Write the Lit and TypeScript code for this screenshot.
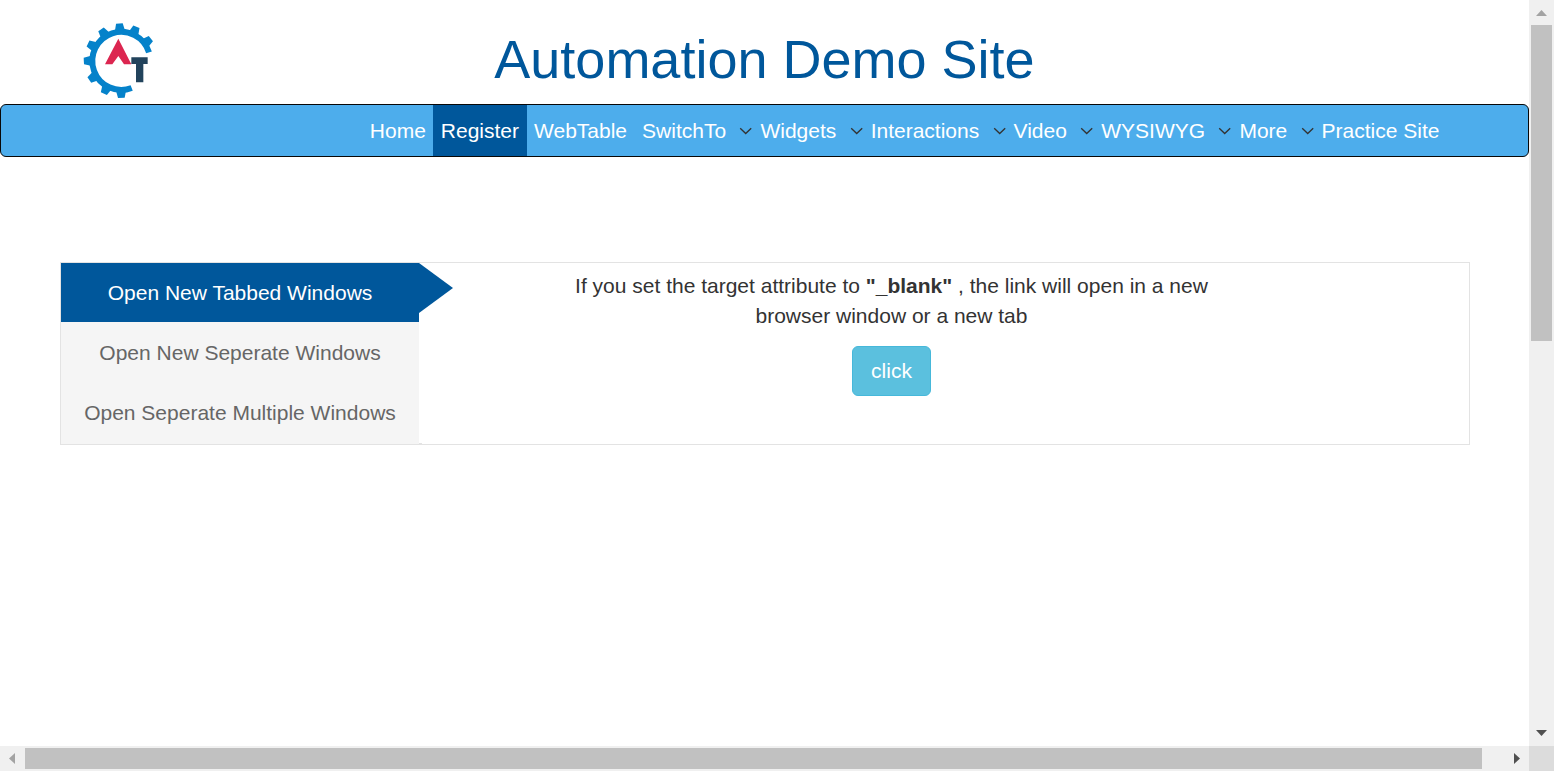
import { LitElement, html, css, svg } from "lit";
import { customElement, state } from "lit/decorators.js";

interface NavItem {
  label: string;
  menu?: boolean;
  active?: boolean;
}

const NAV: NavItem[] = [
  { label: "Home" },
  { label: "Register", active: true },
  { label: "WebTable" },
  { label: "SwitchTo", menu: true },
  { label: "Widgets", menu: true },
  { label: "Interactions", menu: true },
  { label: "Video", menu: true },
  { label: "WYSIWYG", menu: true },
  { label: "More", menu: true },
  { label: "Practice Site" },
];

const TABS = ["Open New Tabbed Windows", "Open New Seperate Windows", "Open Seperate Multiple Windows"];

const TEETH = [-92, -65, -36, -122, -152, 180, 149, 118, 90];

@customElement("site-logo")
export class SiteLogo extends LitElement {
  static styles = css`
    :host { display: block; width: 100px; height: 83px; }
    svg { display: block; }
  `;
  render() {
    return html`<svg width="100" height="83" viewBox="0 0 300 249">
      <path d="M237 112 A87 87 0 1 0 185 219" fill="none" stroke="#0582ca" stroke-width="18" />
      ${TEETH.map(
        (a) => svg`<path transform="translate(153 137) rotate(${a})" d="M90 -15 L111 -11 L112 9 L90 15 Z" fill="#0582ca" />`
      )}
      <path d="M145 71 L184 148 L162 148 L145 123 L127 148 L105 148 Z" fill="#dc2650" />
      <path d="M184 127 H233 V147 H220 V202 H198 V147 H184 Z" fill="#22435c" />
    </svg>`;
  }
}

@customElement("scroll-bar")
export class ScrollBar extends LitElement {
  static styles = css`
    :host { display: flex; background: #f0f0f0; box-sizing: border-box; }
    :host([vertical]) { flex-direction: column; padding: 0 2px; }
    :host(:not([vertical])) { padding: 2px 0; }
    .thumb { background: #c1c1c1; }
    .space { flex: 1; }
    :host([vertical]) .thumb { height: 316px; }
    :host(:not([vertical])) .thumb { width: 1457px; }
    svg { display: block; flex: none; }
  `;
  render() {
    const v = this.hasAttribute("vertical");
    return v
      ? html`<svg width="21" height="25"><path d="M5 16 L10.5 10 L16 16Z" fill="#a3a3a3" /></svg>
          <div class="thumb"></div><div class="space"></div>
          <svg width="21" height="25"><path d="M5 9 L10.5 15 L16 9Z" fill="#505050" /></svg>`
      : html`<svg width="25" height="21"><path d="M15 5 L9 10.5 L15 16Z" fill="#a3a3a3" /></svg>
          <div class="thumb"></div><div class="space"></div>
          <svg width="25" height="21"><path d="M10 5 L16 10.5 L10 16Z" fill="#505050" /></svg>`;
  }
}

@customElement("app-root")
export class AppRoot extends LitElement {
  @state() private tab = 0;

  static styles = css`
    :host {
      display: grid;
      grid-template-columns: 1529px 25px;
      grid-template-rows: 746px 25px;
      width: 1554px;
      height: 771px;
      overflow: hidden;
      background: #fff;
      color: #333;
      font: 21px/30px "Liberation Sans", Arial, sans-serif;
    }
    .page { overflow: hidden; }
    .corner { background: #dcdcdc; }
    .header {
      display: grid;
      grid-template-columns: 70px 100px 1fr;
      height: 104px;
      box-sizing: border-box;
      padding-top: 15px;
    }
    .header site-logo { grid-column: 2; }
    .title {
      margin: 14px 0 0 324.3px;
      font-size: 54px;
      line-height: 60px;
      font-weight: 400;
      color: #00579b;
      white-space: nowrap;
    }
    .nav {
      display: flex;
      box-sizing: border-box;
      height: 53px;
      padding-left: 361.3px;
      border: 1px solid #080808;
      border-radius: 6px;
      background: #4dadec;
      color: #fff;
    }
    .item {
      display: flex;
      align-items: center;
      padding: 0 7.5px;
      white-space: nowrap;
    }
    .item.active { background: #00579b; }
    .caret { display: block; margin-left: 13.4px; margin-right: -7.55px; }
    .panel {
      display: flex;
      box-sizing: border-box;
      width: 1410px;
      height: 183px;
      margin: 105px 0 0 60px;
      border: 1px solid #e3e3e3;
    }
    .tabs { width: 358px; background: #f5f5f5; }
    .tab {
      display: flex;
      position: relative;
      align-items: center;
      justify-content: center;
      height: 60px;
      color: #666;
      cursor: pointer;
    }
    .tab.active { height: 59px; margin-bottom: 1px; background: #00579b; color: #fff; }
    .arrow { position: absolute; left: 358px; top: 0; }
    .edge { align-self: flex-end; width: 3px; height: 1px; background: #e3e3e3; }
    .content {
      display: flex;
      flex-direction: column;
      align-items: center;
      width: 659px;
      margin-left: 140px;
      padding-top: 8px;
      text-align: center;
    }
    .text { margin: 0 0 15px; }
    .button {
      box-sizing: border-box;
      width: 79px;
      height: 50px;
      padding: 0;
      border: 1px solid #46b8da;
      border-radius: 6px;
      background: #5bc0de;
      color: #fff;
      font: inherit;
    }
  `;

  render() {
    return html`
      <div class="page">
        <header class="header">
          <site-logo></site-logo>
          <h1 class="title">Automation Demo Site</h1>
        </header>
        <nav class="nav">
          ${NAV.map(
            (n) => html`<div class="item ${n.active ? "active" : ""}">
              <span>${n.label}</span>${n.menu
                ? html`<svg class="caret" width="13.5" height="10" viewBox="0 0 13.5 10"><path d="M1.2 2.2 L6.7 7.5 L12.2 2.2" fill="none" stroke="#333" stroke-width="1.35" /></svg>`
                : ""}
            </div>`
          )}
        </nav>
        <main class="panel">
          <div class="tabs">
            ${TABS.map(
              (t, i) => html`<div class="tab ${i === this.tab ? "active" : ""}" @click=${() => (this.tab = i)}>
                ${t}
                ${i === this.tab
                  ? html`<svg class="arrow" width="34" height="50"><path d="M0 0 L34 25 L0 50Z" fill="#00579b" /></svg>`
                  : ""}
              </div>`
            )}
          </div>
          <div class="edge"></div>
          <section class="content">
            <p class="text">If you set the target attribute to <b>"_blank"</b> , the link will open in a new<br />browser window or a new tab</p>
            <button class="button">click</button>
          </section>
        </main>
      </div>
      <scroll-bar vertical></scroll-bar>
      <scroll-bar></scroll-bar>
      <div class="corner"></div>
    `;
  }
}
